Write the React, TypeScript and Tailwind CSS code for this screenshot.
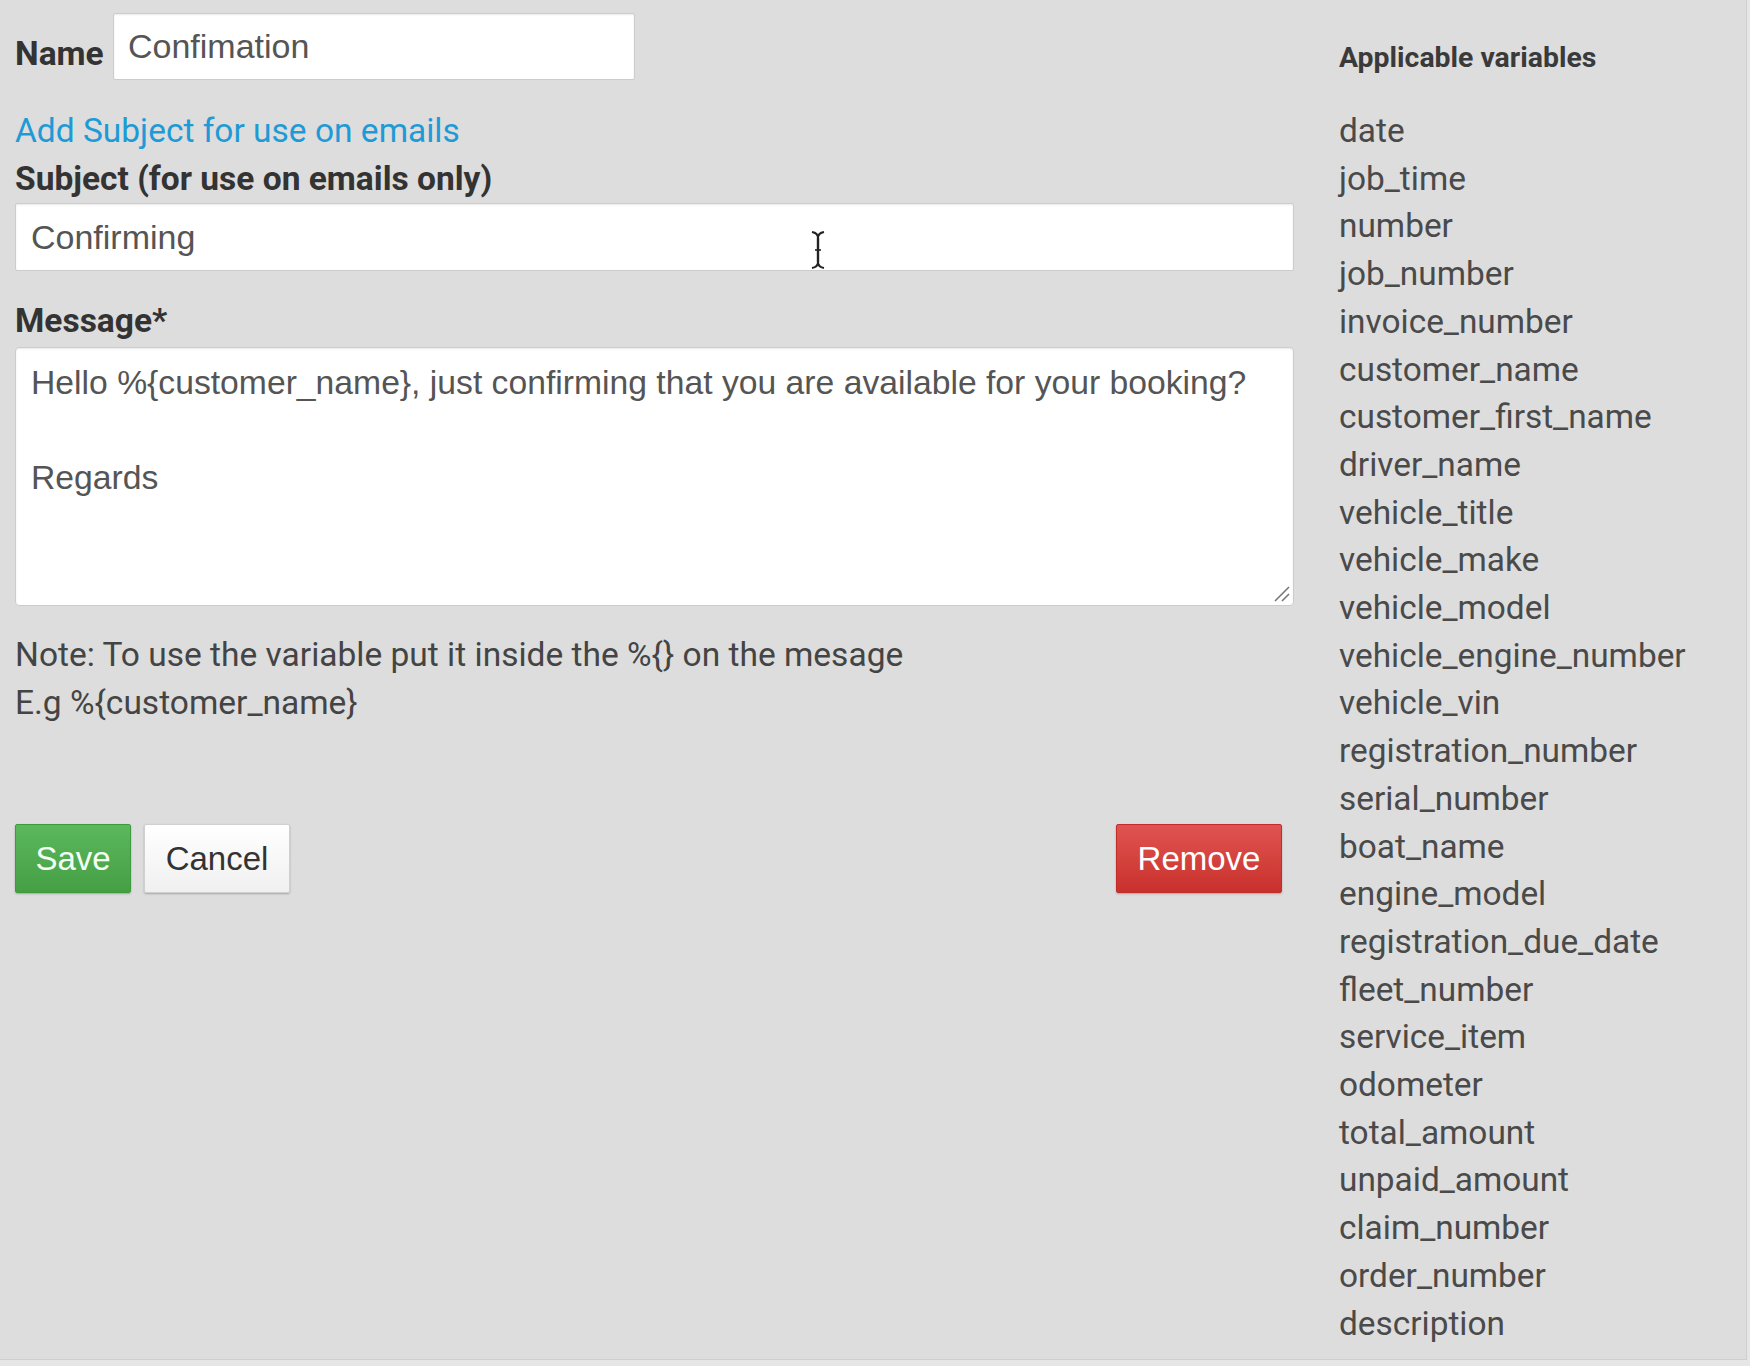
import React from 'react';

const variables = [
  'date',
  'job_time',
  'number',
  'job_number',
  'invoice_number',
  'customer_name',
  'customer_first_name',
  'driver_name',
  'vehicle_title',
  'vehicle_make',
  'vehicle_model',
  'vehicle_engine_number',
  'vehicle_vin',
  'registration_number',
  'serial_number',
  'boat_name',
  'engine_model',
  'registration_due_date',
  'fleet_number',
  'service_item',
  'odometer',
  'total_amount',
  'unpaid_amount',
  'claim_number',
  'order_number',
  'description',
];

const roboto = { fontFamily: 'Roboto, "Noto Sans", sans-serif' };
const helv = { fontFamily: '"Liberation Sans", Arial, sans-serif' };

function IBeam() {
  return (
    <svg width="18" height="40" viewBox="0 0 18 40" className="absolute left-[794px] top-[27px]">
      <path d="M3 2 Q9 3 9 8 Q9 3 15 2" fill="none" stroke="#222" strokeWidth="2" />
      <path d="M9 8 L9 32" stroke="#222" strokeWidth="2.4" />
      <path d="M6 20 L12 20" stroke="#222" strokeWidth="1.6" />
      <path d="M3 38 Q9 37 9 32 Q9 37 15 38" fill="none" stroke="#222" strokeWidth="2" />
    </svg>
  );
}

export default function App() {
  const message = 'Hello %{customer_name}, just confirming that you are available for your booking?\n\nRegards';

  return (
    <div className="min-h-screen w-full bg-[#e6e6e6]">
      <div className="flex w-[1747px] h-[1360px] bg-[#dddddd] border-r border-b border-[#cfcfcf] pl-[15px] pt-[13px]">
        {/* form column */}
        <div className="flex flex-col w-[1279px]">
          <div className="flex items-start">
            <label
              className="w-[98px] mt-[19px] text-[33.5px] leading-[44px] font-bold text-[#333]"
              style={roboto}
            >
              Name
            </label>
            <div
              className="w-[522px] h-[67px] bg-white border border-[#cccccc] rounded-[2px] shadow-[inset_0_1px_2px_rgba(0,0,0,0.09)] flex items-center pl-[14px] text-[34px] text-[#555]"
              style={helv}
            >
              Confimation
            </div>
          </div>

          <a
            className="mt-[29px] text-[33.5px] leading-[44px] text-[#1e9ad6] cursor-pointer"
            style={roboto}
          >
            Add Subject for use on emails
          </a>

          <label
            className="mt-[4px] text-[33.5px] leading-[44px] font-bold text-[#333]"
            style={roboto}
          >
            Subject (for use on emails only)
          </label>
          <div className="relative mt-[2px]">
            <div
              className="h-[68px] bg-white border border-[#cccccc] rounded-[2px] shadow-[inset_0_1px_2px_rgba(0,0,0,0.09)] flex items-center pl-[15px] text-[34px] text-[#555]"
              style={helv}
            >
              Confirming
            </div>
            <IBeam />
          </div>

          <label
            className="mt-[28px] text-[33.5px] leading-[44px] font-bold text-[#333]"
            style={roboto}
          >
            Message*
          </label>
          <div className="relative mt-[4px]">
            <textarea
              readOnly
              value={message}
              className="block w-full h-[259px] resize-none bg-white border border-[#cccccc] rounded-[4px] shadow-[inset_0_1px_2px_rgba(0,0,0,0.09)] pt-[11px] px-[15px] text-[33.7px] leading-[47.4px] text-[#555] outline-none overflow-hidden"
              style={helv}
            />
            <svg width="20" height="20" viewBox="0 0 20 20" className="absolute right-[3px] bottom-[3px]">
              <path d="M18 4 L4 18" stroke="#777" strokeWidth="1.6" />
              <path d="M18 11 L11 18" stroke="#777" strokeWidth="1.6" />
            </svg>
          </div>

          <div className="mt-[25px] text-[33.5px] leading-[48px] text-[#444]" style={roboto}>
            <div>Note: To use the variable put it inside the %{'{}'} on the mesage</div>
            <div>E.g %{'{customer_name}'}</div>
          </div>

          <div className="mt-[97px] flex items-center" style={helv}>
            <button className="w-[116px] h-[69px] text-[33px] text-[#f4fff4] bg-linear-to-b from-[#5cb85c] to-[#45a045] border border-[#3e9a3e] rounded-[2px] shadow-[0_1px_2px_rgba(0,0,0,0.25)]">
              Save
            </button>
            <button className="ml-[13px] w-[146px] h-[69px] text-[33px] text-[#333] bg-linear-to-b from-[#ffffff] to-[#f0f0f0] border border-[#d0d0d0] rounded-[2px] shadow-[0_1px_2px_rgba(0,0,0,0.25)]">
              Cancel
            </button>
            <div className="flex-1" />
            <button className="mr-[12px] w-[166px] h-[69px] text-[33px] text-white bg-linear-to-b from-[#e05350] to-[#c9302c] border border-[#c12e2a] rounded-[2px] shadow-[0_1px_2px_rgba(0,0,0,0.25)]">
              Remove
            </button>
          </div>
        </div>

        {/* variables column */}
        <div className="ml-[45px] flex flex-col" style={roboto}>
          <div className="mt-[25px] text-[28.4px] leading-[40px] font-bold text-[#3a3a3a]">
            Applicable variables
          </div>
          <ul className="mt-[29px]">
            {variables.map((v) => (
              <li key={v} className="text-[33.4px] leading-[47.7px] text-[#4a4a4a]">
                {v}
              </li>
            ))}
          </ul>
        </div>
      </div>
    </div>
  );
}
